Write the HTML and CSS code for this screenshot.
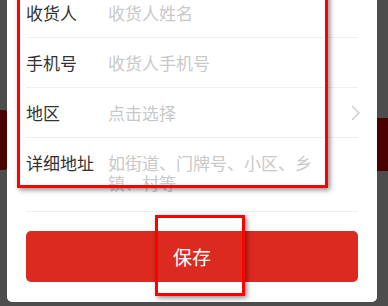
FILE: index.html
```html
<!DOCTYPE html>
<html>
  <head>
    <meta charset="utf-8"/>
    <meta name="viewport" content="width=device-width, initial-scale=1">
    <link rel="stylesheet" href="styles.css">
  </head>
<body>

<div class="behind behind_left"></div>
<div class="behind behind_right"></div>

<div class="panel">
  <div class="row">
    <span class="label">收货人</span>
    <span class="hint">收货人姓名</span>
  </div>
  <div class="row">
    <span class="label">手机号</span>
    <span class="hint">收货人手机号</span>
  </div>
  <div class="row">
    <span class="label">地区</span>
    <span class="hint">点击选择</span>
    <svg class="arrow" width="9" height="16" viewBox="0 0 9 16">
      <polyline points="1,1 8,8 1,15" fill="none" stroke="#c8c8c8" stroke-width="1.3"/>
    </svg>
  </div>
  <div class="row row_tall">
    <span class="label">详细地址</span>
    <span class="hint hint_wrap">如街道、门牌号、小区、乡镇、村等</span>
  </div>
  <button class="button_save">保存</button>
</div>

<div class="mark mark_form"></div>
<div class="mark mark_save"></div>

</body>
</html>
```

FILE: styles.css
```css
* {
  box-sizing: border-box;
}

body {
  margin: 0;
  height: 306px;
  overflow: hidden;
  background-color: #4d4d4d;
  font-family: "Noto Sans CJK SC", "Noto Sans", sans-serif;
  position: relative;
}

.behind {
  position: absolute;
  background-color: #4a0000;
  border-radius: 4px;
}

.behind_left {
  left: -6px;
  top: 110px;
  width: 14px;
  height: 60px;
}

.behind_right {
  left: 372px;
  top: 118px;
  width: 24px;
  height: 53px;
}

.panel {
  position: relative;
  margin: -12px 11px 0 7px;
  padding: 0 19px 20px;
  background-color: #fff;
  border-radius: 0 0 5px 5px;
}

.row {
  display: flex;
  align-items: center;
  height: 50px;
  border-bottom: 1px solid #efefef;
  font-size: 17px;
  line-height: 20px;
}

.row_tall {
  height: 74px;
  align-items: flex-start;
  padding-top: 15px;
}

.label {
  width: 82px;
  color: #333;
}

.hint {
  flex: 1;
  color: #c9c9c9;
}

.hint_wrap {
  max-width: 218px;
}

.arrow {
  margin-right: -2px;
}

.button_save {
  display: block;
  width: 100%;
  height: 51px;
  margin-top: 19px;
  border: none;
  border-radius: 5px;
  background-color: #dd2a20;
  color: #fff;
  font-family: inherit;
  font-size: 19px;
}

.mark {
  position: absolute;
  border: 3px solid #ff0000;
  box-shadow: 2px 2px 5px rgba(0, 0, 0, 0.45);
}

.mark_form {
  left: 17px;
  top: -10px;
  width: 311px;
  height: 198px;
}

.mark_save {
  left: 155px;
  top: 215px;
  width: 90px;
  height: 81px;
}
```
